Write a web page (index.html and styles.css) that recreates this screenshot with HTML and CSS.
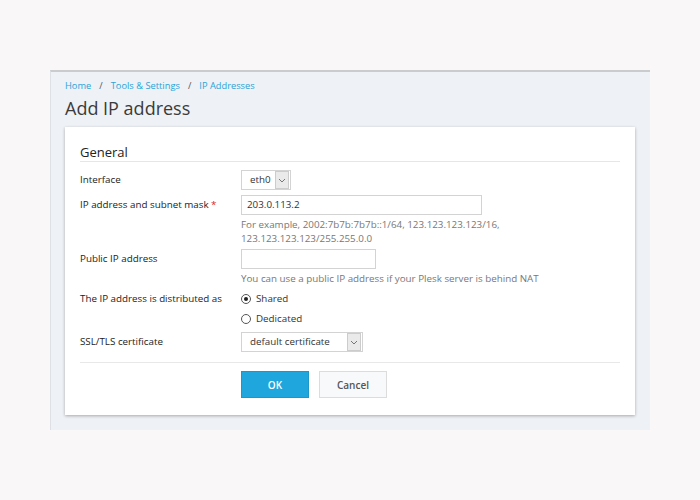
FILE: index.html
```html
<!DOCTYPE html>
<html lang="en">
<head>
  <meta charset="UTF-8" />
  <title>Add IP address</title>
  <link rel="stylesheet" href="styles.css">
</head>
<body>
  <div class="page">
    <div class="breadcrumbs">
      <a href="#">Home</a><span class="sep">/</span><a href="#">Tools &amp; Settings</a><span class="sep">/</span><a href="#">IP Addresses</a>
    </div>
    <h1>Add IP address</h1>

    <div class="card">
      <h2>General</h2>

      <div class="row">
        <div class="label">Interface</div>
        <div class="field">
          <div class="select small"><span>eth0</span><i class="arrow"><svg width="8" height="5" viewBox="0 0 8 5"><path d="M1 1l3 3 3-3" fill="none" stroke="#777" stroke-width="1"/></svg></i></div>
        </div>
      </div>

      <div class="row">
        <div class="label">IP address and subnet mask <span class="req">*</span></div>
        <div class="field">
          <div class="input wide">203.0.113.2</div>
          <div class="hint">For example, 2002:7b7b:7b7b::1/64, 123.123.123.123/16,<br>123.123.123.123/255.255.0.0</div>
        </div>
      </div>

      <div class="row">
        <div class="label">Public IP address</div>
        <div class="field">
          <div class="input mid"></div>
          <div class="hint">You can use a public IP address if your Plesk server is behind NAT</div>
        </div>
      </div>

      <div class="row tight">
        <div class="label">The IP address is distributed as</div>
        <div class="field">
          <div class="radio checked"><i></i>Shared</div>
          <div class="radio"><i></i>Dedicated</div>
        </div>
      </div>

      <div class="row">
        <div class="label">SSL/TLS certificate</div>
        <div class="field">
          <div class="select cert"><span>default certificate</span><i class="arrow"><svg width="8" height="5" viewBox="0 0 8 5"><path d="M1 1l3 3 3-3" fill="none" stroke="#777" stroke-width="1"/></svg></i></div>
        </div>
      </div>

      <div class="actions">
        <button class="btn ok">OK</button>
        <button class="btn cancel">Cancel</button>
      </div>
    </div>
  </div>
</body>
</html>
```

FILE: styles.css
```css
body {
  margin: 0;
  background: #f9f7f7;
  font-family: "Open Sans", "Noto Sans", sans-serif;
  color: #333;
}
.page {
  box-sizing: border-box;
  margin: 70px 50px 0;
  height: 360px;
  background: #eef1f5;
  border-top: 2px solid #c9cbcd;
  border-left: 1px solid #dde1e6;
  padding: 7px 15px 0 14px;
}
.breadcrumbs {
  font-size: 9.3px;
  line-height: 14px;
}
.breadcrumbs a {
  color: #2ba3d8;
  text-decoration: none;
}
.breadcrumbs .sep {
  color: #555;
  margin: 0 8px;
}
h1 {
  margin: 3px 0 0;
  font-size: 18px;
  font-weight: normal;
  line-height: 24px;
  color: #3b3b3b;
}
.card {
  margin-top: 7px;
  background: #fff;
  box-shadow: 0 1px 3px rgba(0, 0, 0, 0.3);
  padding: 16px 15px 17px;
}
h2 {
  margin: 0 0 8px;
  font-size: 13px;
  font-weight: normal;
  line-height: 18px;
  color: #222;
  border-bottom: 1px solid #e6e6e6;
}
.row {
  display: flex;
  font-size: 9.8px;
  margin-bottom: 5px;
}
.row.tight {
  margin-bottom: 3px;
}
.label {
  width: 161px;
  line-height: 20px;
  color: #222;
}
.req {
  color: #d22;
}
.field {
  flex: 1;
}
.select, .input {
  box-sizing: border-box;
  height: 20px;
  border: 1px solid #d3d3d3;
  line-height: 18px;
  display: flex;
  align-items: center;
}
.select span {
  flex: 1;
  padding-left: 8px;
}
.select .arrow {
  width: 12px;
  height: 16px;
  margin-right: 1px;
  background: #eaeaea;
  border: 1px solid #ccc;
  display: flex;
  align-items: center;
  justify-content: center;
}
.select.small {
  width: 50px;
}
.select.cert {
  width: 122px;
}
.input {
  padding-left: 5px;
}
.input.wide {
  width: 241px;
}
.input.mid {
  width: 135px;
}
.hint {
  color: #777;
  line-height: 14px;
  margin: 3px 0 -2px;
}
.radio {
  display: flex;
  align-items: center;
  line-height: 20px;
  height: 20px;
}
.radio i {
  box-sizing: border-box;
  width: 10px;
  height: 10px;
  border: 1px solid #555;
  border-radius: 50%;
  margin-right: 5px;
  position: relative;
}
.radio.checked i::after {
  content: "";
  position: absolute;
  left: 2px;
  top: 2px;
  width: 4px;
  height: 4px;
  border-radius: 50%;
  background: #222;
}
.actions {
  border-top: 1px solid #e8e8e8;
  margin-top: 10px;
  padding: 8px 0 0 161px;
  display: flex;
  gap: 10px;
}
.btn {
  width: 68px;
  height: 27px;
  font-family: inherit;
  font-size: 10px;
  font-weight: 600;
  border-radius: 0;
}
.btn.ok {
  background: #1fa6dc;
  border: 1px solid #1b97ca;
  color: #fff;
}
.btn.cancel {
  background: #f8f9fa;
  border: 1px solid #dcdcdc;
  color: #555;
}
```
